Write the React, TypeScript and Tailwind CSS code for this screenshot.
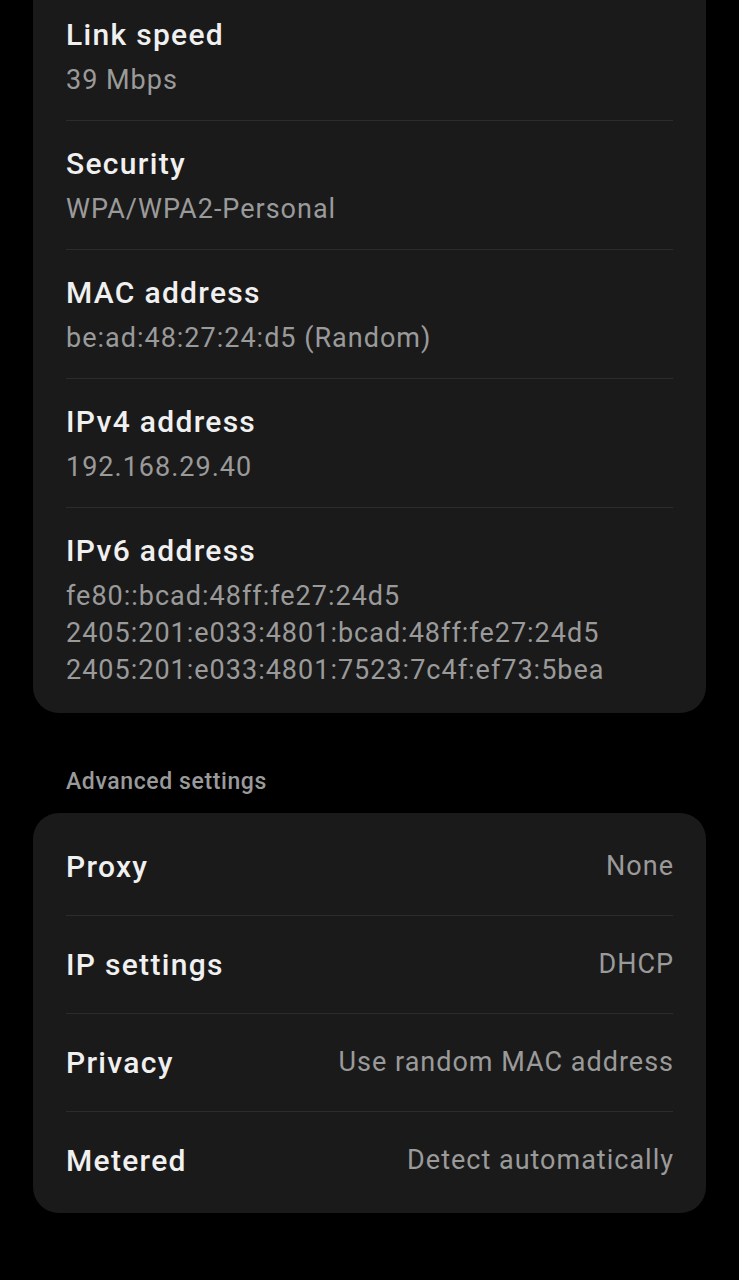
import React from 'react';

const details = [
  { title: 'Link speed', lines: ['39 Mbps'] },
  { title: 'Security', lines: ['WPA/WPA2-Personal'] },
  { title: 'MAC address', lines: ['be:ad:48:27:24:d5 (Random)'] },
  { title: 'IPv4 address', lines: ['192.168.29.40'] },
  {
    title: 'IPv6 address',
    lines: [
      'fe80::bcad:48ff:fe27:24d5',
      '2405:201:e033:4801:bcad:48ff:fe27:24d5',
      '2405:201:e033:4801:7523:7c4f:ef73:5bea',
    ],
  },
];

const advanced = [
  { label: 'Proxy', value: 'None' },
  { label: 'IP settings', value: 'DHCP' },
  { label: 'Privacy', value: 'Use random MAC address' },
  { label: 'Metered', value: 'Detect automatically' },
];

const App = () => {
  return (
    <div
      className="min-h-[1280px] bg-black px-[33px] pb-16"
      style={{ fontFamily: 'Roboto, "Noto Sans", sans-serif' }}
    >
      <div className="bg-[#1a1a1a] rounded-b-[26px] px-[33px] pb-[24px]">
        {details.map((d, i) => (
          <div
            key={d.title}
            className={
              i === 0
                ? 'pt-[15px] pb-[21px]'
                : 'pt-[23px] pb-[21px] border-t border-[#2c2c2c] last:pb-0'
            }
          >
            <div className="text-[30px] leading-[40px] font-medium tracking-[1.3px] text-[#f0f0f0]">
              {d.title}
            </div>
            <div className="mt-[7px] text-[27px] leading-[37px] tracking-[1px] text-[#9a9a9a]">
              {d.lines.map((l) => (
                <div key={l}>{l}</div>
              ))}
            </div>
          </div>
        ))}
      </div>

      <div className="mt-[54px] mb-[16px] px-[33px] text-[23px] leading-[30px] font-medium tracking-[0.6px] text-[#9a9a9a]">
        Advanced settings
      </div>

      <div className="bg-[#1a1a1a] rounded-[26px] px-[33px] pt-[4px] pb-[4px]">
        {advanced.map((a, i) => (
          <div
            key={a.label}
            className={
              'h-[98px] flex items-center justify-between ' +
              (i > 0 ? 'border-t border-[#2c2c2c]' : '')
            }
          >
            <span className="text-[30px] font-medium tracking-[1.3px] text-[#f0f0f0]">{a.label}</span>
            <span className="text-[27px] tracking-[1px] -mr-[1px] text-[#9a9a9a]">{a.value}</span>
          </div>
        ))}
      </div>
    </div>
  );
};

export default App;
